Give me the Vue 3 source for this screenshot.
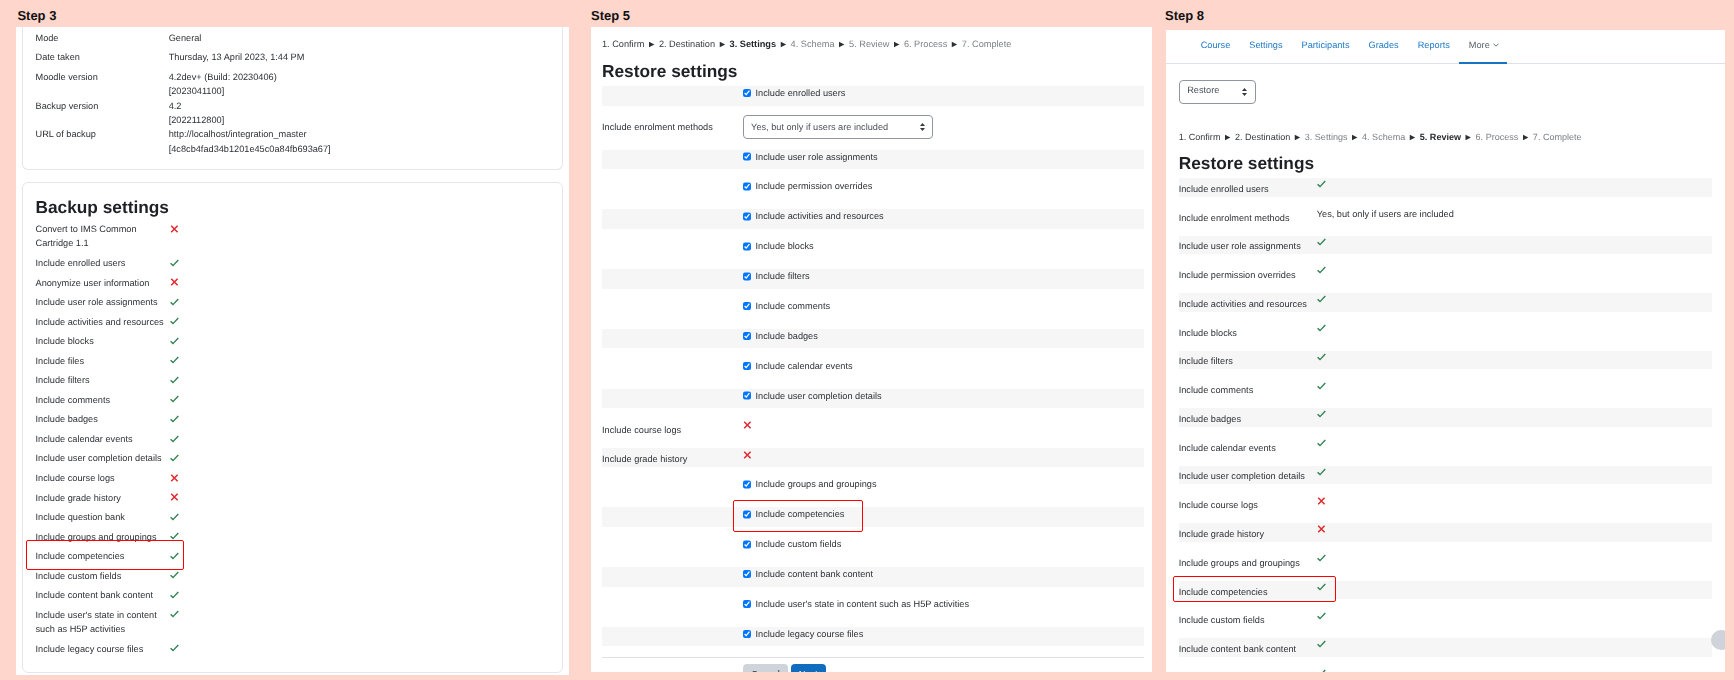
<script setup>
const info = [
  { k: 'Mode', v: ['General'], cls: 'gap' },
  { k: 'Date taken', v: ['Thursday, 13 April 2023, 1:44 PM'], cls: 'gap wide' },
  { k: 'Moodle version', v: ['4.2dev+ (Build: 20230406)', '[2023041100]'], cls: '' },
  { k: 'Backup version', v: ['4.2', '[2022112800]'], cls: '' },
  { k: 'URL of backup', v: ['http://localhost/integration_master', '[4c8cb4fad34b1201e45c0a84fb693a67]'], cls: '' }
]
const backup = [
  ['Convert to IMS Common Cartridge 1.1', false],
  ['Include enrolled users', true],
  ['Anonymize user information', false],
  ['Include user role assignments', true],
  ['Include activities and resources', true],
  ['Include blocks', true],
  ['Include files', true],
  ['Include filters', true],
  ['Include comments', true],
  ['Include badges', true],
  ['Include calendar events', true],
  ['Include user completion details', true],
  ['Include course logs', false],
  ['Include grade history', false],
  ['Include question bank', true],
  ['Include groups and groupings', true],
  ['Include competencies', true, true],
  ['Include custom fields', true],
  ['Include content bank content', true],
  ["Include user's state in content such as H5P activities", true],
  ['Include legacy course files', true]
]
const settings = [
  { t: 'check', text: 'Include enrolled users' },
  { t: 'pick', label: 'Include enrolment methods', text: 'Yes, but only if users are included' },
  { t: 'check', text: 'Include user role assignments' },
  { t: 'check', text: 'Include permission overrides' },
  { t: 'check', text: 'Include activities and resources' },
  { t: 'check', text: 'Include blocks' },
  { t: 'check', text: 'Include filters' },
  { t: 'check', text: 'Include comments' },
  { t: 'check', text: 'Include badges' },
  { t: 'check', text: 'Include calendar events' },
  { t: 'check', text: 'Include user completion details' },
  { t: 'cross', label: 'Include course logs' },
  { t: 'cross', label: 'Include grade history', tight: true },
  { t: 'check', text: 'Include groups and groupings' },
  { t: 'check', text: 'Include competencies', mark: true },
  { t: 'check', text: 'Include custom fields' },
  { t: 'check', text: 'Include content bank content' },
  { t: 'check', text: "Include user's state in content such as H5P activities" },
  { t: 'check', text: 'Include legacy course files' }
]
const review = [
  ['Include enrolled users', 'y'],
  ['Include enrolment methods', 'text'],
  ['Include user role assignments', 'y'],
  ['Include permission overrides', 'y'],
  ['Include activities and resources', 'y'],
  ['Include blocks', 'y'],
  ['Include filters', 'y'],
  ['Include comments', 'y'],
  ['Include badges', 'y'],
  ['Include calendar events', 'y'],
  ['Include user completion details', 'y'],
  ['Include course logs', 'n'],
  ['Include grade history', 'n'],
  ['Include groups and groupings', 'y'],
  ['Include competencies', 'y', true],
  ['Include custom fields', 'y'],
  ['Include content bank content', 'y'],
  ["Include user's state in content such as H5P activities", 'y']
]
const tabs = ['Course', 'Settings', 'Participants', 'Grades', 'Reports']
const stages = ['1. Confirm', '2. Destination', '3. Settings', '4. Schema', '5. Review', '6. Process', '7. Complete']
const stageClass = (i, cur) => (i === cur ? 'now' : i < 2 ? 'past' : 'todo')
</script>

<template>
  <div class="page">
    <section class="col col-a">
      <h2 class="step step-a">Step 3</h2>
      <div class="panel panel-a">
        <div class="card card-top">
          <div v-for="r in info" :key="r.k" class="info-row" :class="r.cls">
            <div>{{ r.k }}</div>
            <div><div v-for="l in r.v" :key="l">{{ l }}</div></div>
          </div>
        </div>
        <div class="card card-bottom">
          <h3 class="title">Backup settings</h3>
          <div v-for="r in backup" :key="r[0]" class="list-row">
            <div>{{ r[0] }}</div>
            <div class="mark-cell">
              <svg v-if="r[1]" class="ico" width="9" height="8" viewBox="0 0 9 8"><path d="M.6 4.2 3 6.6 8.3 1" fill="none" stroke="#2f8050" stroke-width="1.35"/></svg>
              <svg v-else class="ico" width="9" height="8" viewBox="0 0 9 8"><path d="M1.2.8 7.6 7.2M7.6.8 1.2 7.2" fill="none" stroke="#e0282e" stroke-width="1.5"/></svg>
            </div>
            <span v-if="r[2]" class="redbox redbox-a"></span>
          </div>
        </div>
      </div>
    </section>

    <section class="col col-b">
      <h2 class="step">Step 5</h2>
      <div class="panel panel-b">
        <div class="crumbs crumbs-b">
          <template v-for="(s, i) in stages" :key="s">
            <span :class="stageClass(i, 2)">{{ s }}</span><span v-if="i < 6" class="sep">►</span>
          </template>
        </div>
        <h3 class="title title-b">Restore settings</h3>
        <div v-for="r in settings" :key="r.text || r.label" class="set-row" :class="['row-' + r.t, { tight: r.tight }]">
          <div class="set-label">{{ r.label }}</div>
          <div class="set-value">
            <template v-if="r.t === 'check'">
              <label class="chk"><input type="checkbox" checked /><span>{{ r.text }}</span></label>
              <span v-if="r.mark" class="redbox redbox-b"></span>
            </template>
            <div v-else-if="r.t === 'pick'" class="select select-b">
              <span>{{ r.text }}</span>
              <svg width="5" height="8" viewBox="0 0 5 8"><path d="M2.5 0 5 3H0zM2.5 8 0 5h5z" fill="#343a40"/></svg>
            </div>
            <svg v-else class="ico" width="9" height="8" viewBox="0 0 9 8"><path d="M1.2.8 7.6 7.2M7.6.8 1.2 7.2" fill="none" stroke="#e0282e" stroke-width="1.5"/></svg>
          </div>
        </div>
        <div class="actions">
          <button class="btn cancel">Cancel</button>
          <button class="btn next">Next</button>
        </div>
      </div>
    </section>

    <section class="col col-c">
      <h2 class="step step-c">Step 8</h2>
      <div class="panel panel-c">
        <nav class="tabs">
          <a v-for="t in tabs" :key="t" class="tab">{{ t }}</a>
          <a class="tab more">More
            <svg width="6" height="4" viewBox="0 0 6 4"><path d="M.5.7 3 3.2 5.5.7" fill="none" stroke="#5a6168" stroke-width=".9"/></svg>
          </a>
        </nav>
        <div class="select select-c">
          <span>Restore</span>
          <svg width="5" height="8" viewBox="0 0 5 8"><path d="M2.5 0 5 3H0zM2.5 8 0 5h5z" fill="#343a40"/></svg>
        </div>
        <div class="crumbs crumbs-c">
          <template v-for="(s, i) in stages" :key="s">
            <span :class="stageClass(i, 4)">{{ s }}</span><span v-if="i < 6" class="sep">►</span>
          </template>
        </div>
        <h3 class="title title-c">Restore settings</h3>
        <div v-for="r in review" :key="r[0]" class="rev-row">
          <div class="rev-label">{{ r[0] }}</div>
          <div class="rev-value">
            <span v-if="r[1] === 'text'" class="rev-text">Yes, but only if users are included</span>
            <svg v-else-if="r[1] === 'y'" class="ico" width="9" height="8" viewBox="0 0 9 8"><path d="M.6 4.2 3 6.6 8.3 1" fill="none" stroke="#2f8050" stroke-width="1.35"/></svg>
            <svg v-else class="ico" width="9" height="8" viewBox="0 0 9 8"><path d="M1.2.8 7.6 7.2M7.6.8 1.2 7.2" fill="none" stroke="#e0282e" stroke-width="1.5"/></svg>
          </div>
          <span v-if="r[2]" class="redbox redbox-c"></span>
        </div>
        <span class="fab"></span>
      </div>
    </section>
  </div>
</template>

<style>
html, body { margin: 0; background: #ffd6cc; }
</style>

<style scoped>
.page {
  display: flex;
  height: 680px;
  padding-left: 16px;
  overflow: hidden;
  background: #ffd6cc;
  font-family: "Liberation Sans", Arial, sans-serif;
  font-size: 9.2px;
  line-height: 14.45px;
  color: #2b3035;
  text-rendering: geometricPrecision;
}
.col { flex: none; }
.col-a { width: 553px; margin-right: 22px; }
.col-b { width: 561px; margin-right: 14px; }
.col-c { width: 559px; }
.step {
  margin: 0;
  height: 27px;
  font-size: 13px;
  line-height: 31px;
  font-weight: 700;
  color: #111;
}
.step-a { padding-left: 1.4px; }
.step-c { height: 30px; margin-left: -1px; }
.panel { background: #fff; overflow: hidden; position: relative; }
.panel > * { filter: blur(.3px); }
.panel-a { height: 648px; padding: 0 6px; box-sizing: border-box; }
.panel-b { height: 645px; padding: 10px 8px 0 11px; box-sizing: border-box; }
.panel-c { height: 642px; }

.card { border: 1px solid #e3e6ea; border-radius: 6px; padding: 0 12.5px; box-sizing: border-box; }
.card-top { border-top: 0; border-top-left-radius: 0; border-top-right-radius: 0; padding-top: 3.5px; height: 142.5px; margin-bottom: 12.5px; }
.card-bottom { height: 491px; padding-top: 12.7px; }
.info-row { display: grid; grid-template-columns: 133.2px 1fr; }
.info-row.gap { margin-bottom: 5px; }
.info-row.wide { margin-bottom: 5.2px; }

.title {
  margin: 0 0 4.3px;
  font-size: 17.3px;
  line-height: 22px;
  font-weight: 700;
  color: #1d2125;
}
.title-b { margin: 8.1px 0 4.4px; }
.title-c { margin: 8px 12.7px 4px; }

.list-row { display: grid; grid-template-columns: 133.2px 1fr; position: relative; margin-bottom: 5.1px; }
.mark-cell { padding-left: .9px; }
.ico { display: block; }
.list-row .ico { margin-top: 2.6px; }

.redbox { position: absolute; border: 1.5px solid #f00; border-radius: 2px; box-sizing: border-box; pointer-events: none; }
.redbox-a { left: -9.5px; width: 158px; top: -8.8px; height: 30px; }
.redbox-b { left: -10px; top: -7.5px; width: 130.6px; height: 32.4px; }
.redbox-c { left: -6px; top: -5.3px; width: 163.6px; height: 26px; }

.crumbs { white-space: nowrap; color: #343a40; }
.crumbs .todo { color: #7a8087; }
.crumbs .now { font-weight: 700; color: #23272b; }
.crumbs .sep { font-size: 9px; line-height: 1; margin: 0 2.8px; color: #2b3035; }
.crumbs-c { margin: 26px 12.7px 0; font-size: 9.05px; }

.set-row { display: grid; grid-template-columns: 140.6px 1fr; min-height: 19.7px; margin-bottom: 10.2px; }
.set-row:nth-child(odd) { background: #f6f6f6; }
.set-row.row-pick { height: 23.4px; margin-bottom: 11px; margin-top: -.7px; align-items: center; }
.set-row.row-cross .set-label { padding-top: 4.7px; }
.set-row.row-cross .ico { margin-top: 3px; }
.set-row.tight { min-height: 18.7px; margin-bottom: 10.3px; }
.set-row.tight .set-label { padding-top: 3.7px; }
.set-value { position: relative; }
.chk { display: flex; align-items: center; gap: 4.3px; margin: 0; }
.chk input { width: 8.6px; height: 8.6px; margin: 0; flex: none; }

.select {
  display: flex;
  align-items: center;
  justify-content: space-between;
  box-sizing: border-box;
  height: 23.4px;
  border: 1px solid #8f959e;
  border-radius: 4px;
  color: #495057;
}
.select-b { width: 190.2px; padding: 0 7px 0 7.5px; }
.select-c { width: 77.3px; margin: 16.3px 0 0 12.7px; padding: 0 7.5px 4px 7.5px; }
.select-c svg { margin-top: 4px; }

.actions { border-top: 1.2px solid #dee2e6; padding: 6px 0 0 140.6px; display: flex; gap: 2.3px; }
.btn {
  height: 21px;
  border: 0;
  border-radius: 4px;
  font: inherit;
  padding: 0;
}
.cancel { width: 45.7px; background: #ced4da; color: #1d2125; }
.next { width: 35px; background: #0f6cbf; color: #fff; }

.tabs { display: flex; height: 34px; box-sizing: border-box; border-bottom: 1.2px solid #dee2e6; padding-left: 25.2px; }
.tab { padding: 7.6px 9.5px 0; color: #1a76c7; height: 34px; box-sizing: border-box; white-space: nowrap; }
.tab.more { color: #5a6168; border-bottom: 2px solid #1574c4; width: 48px; padding-right: 0; }
.tab.more svg { margin-left: 1px; vertical-align: 1px; }

.rev-row { position: relative; display: grid; grid-template-columns: 138.1px 1fr; margin: 0 13.3px 10.38px 12.7px; height: 18.4px; }
.rev-row:nth-of-type(odd) { background: #f6f6f6; }
.rev-label { padding-top: 3.7px; white-space: nowrap; }
.rev-value .ico { margin-top: 2px; }
.rev-text { display: block; }

.fab { position: absolute; right: -6px; top: 600px; width: 20px; height: 20px; border-radius: 50%; background: #ced4da; }
</style>
